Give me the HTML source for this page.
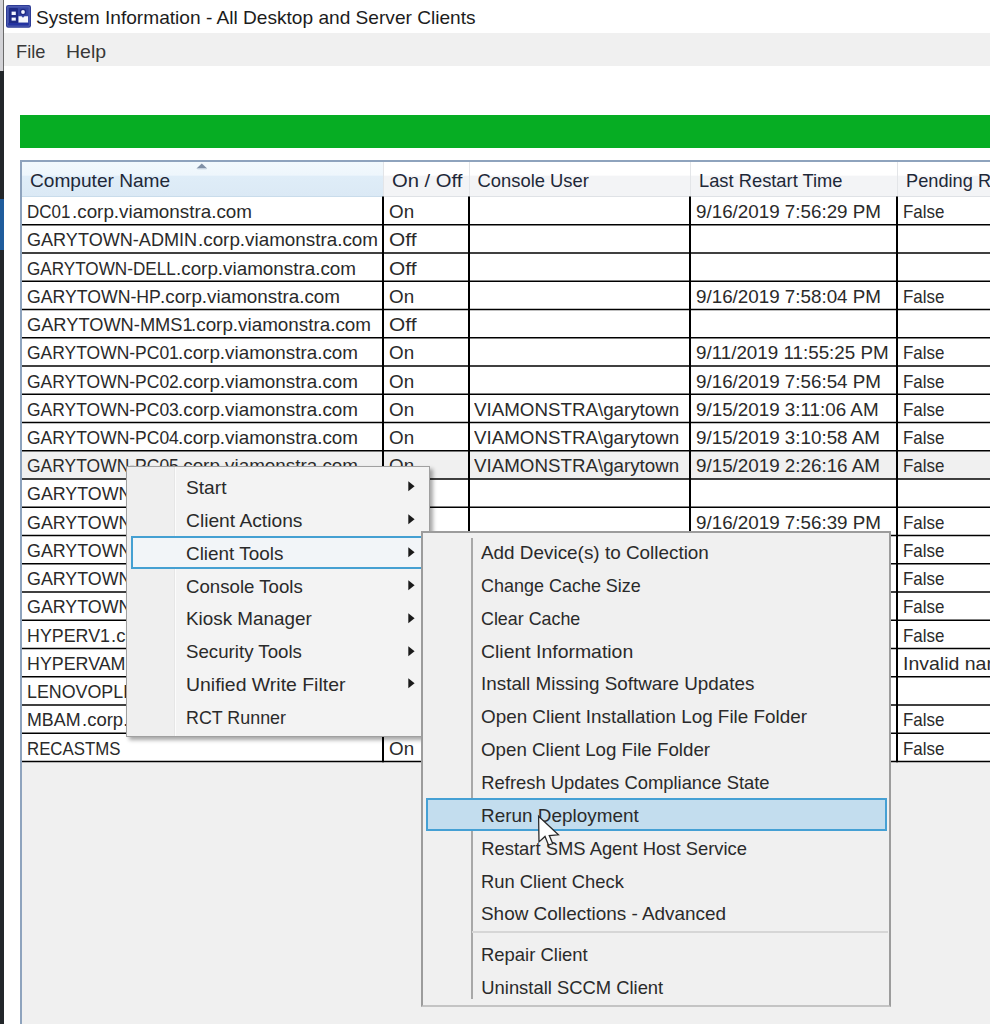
<!DOCTYPE html>
<html><head><meta charset="utf-8">
<style>
html,body{margin:0;padding:0;}
body{width:990px;height:1024px;position:relative;overflow:hidden;background:#fff;font-family:"Liberation Sans",sans-serif;color:#000;}
div{position:absolute;box-sizing:border-box;}
.t{white-space:nowrap;transform-origin:0 0;}
.strip{left:0;top:0;width:4px;height:1024px;background:#22262a;}
.menubar{left:4px;top:33px;width:986px;height:33px;background:#f0f0f0;}
.green{left:20px;top:115px;width:970px;height:33px;background:#06ad23;}
.tbl{left:20px;top:160px;width:970px;height:864px;background:#f0f0f0;border-left:2px solid #8ea3bd;border-top:2px solid #8ea3bd;}
.hdr{left:22px;top:162px;width:968px;height:34.5px;background:linear-gradient(#fff 0px,#fff 13px,#f3f4f6 14.5px,#f3f4f6 100%);border-bottom:1px solid #dfe2e6;}
.hsort{left:22px;top:162px;width:361px;height:34.5px;background:linear-gradient(#f2f9fd 0px,#eef6fc 13px,#dfedf8 14.5px,#dbe9f5 100%);border-bottom:1px solid #c9dceb;}
.hsep{top:162px;width:1px;height:34px;background:#e3e5e8;}
.row{left:22px;width:968px;}
.m1{left:126px;top:466px;width:304px;height:271px;background:linear-gradient(90deg,#efefef 49px,#f3f3f3 49px);border:1px solid #a0a0a0;box-shadow:3px 3px 4px rgba(0,0,0,0.35);}
.gut1{left:174px;top:467px;width:2px;height:269px;background:linear-gradient(90deg,#e6e6e6 50%,#fcfcfc 50%);}
.hi1{left:131px;top:536px;width:292px;height:33px;border:2px solid #45a0d2;background:#f2f5f8;}
.m2{left:421px;top:531px;width:470px;height:476px;background:#f0f0f0;border:2px solid #9c9c9c;border-bottom-color:#c4c4c4;}
.gut2{left:471px;top:538px;width:1.6px;height:461px;background:#a8a8a8;}
.sep2{left:472px;top:931px;width:416px;height:1.6px;background:#d6d6d6;}
.hi2{left:426px;top:797.5px;width:461px;height:33px;border:2px solid #45a0d4;background:#c3ddee;}
</style></head><body>
<div class="strip"></div>
<div style="left:0;top:0;width:3px;height:71px;background:#d2d2d6"></div><div style="left:3px;top:0;width:1px;height:71px;background:#6a6a6a"></div>
<div style="left:0;top:199px;width:3.5px;height:51px;background:#1f5c9c"></div>
<svg style="position:absolute;left:0;top:0" width="40" height="32" viewBox="0 0 40 32">
<rect x="6" y="5" width="25" height="22.8" rx="2.2" fill="#2d3b96"/>
<rect x="7.3" y="6.3" width="22.4" height="20.2" rx="1" fill="#5866b8"/>
<rect x="8.3" y="7.3" width="20.4" height="18.2" fill="#3646a4"/>
<rect x="9" y="8" width="9" height="16" rx="1" fill="#1f2b85"/>
<rect x="11.6" y="11.6" width="4.2" height="3.4" fill="#f4f7ff"/>
<rect x="11.6" y="17.6" width="4.2" height="3" fill="#f4f7ff"/>
<circle cx="23" cy="12" r="3.2" fill="#1f2b85"/>
<circle cx="23" cy="12" r="1.9" fill="#f4f7ff"/>
<path d="M18.5,16.2 L21.5,16.2 L23,17.8 L24.5,16.2 L28,16.2 L28,22.4 L18.5,22.4 Z" fill="#f6f8fc"/>
<rect x="8.3" y="23" width="20.4" height="2.5" fill="#2433a0"/>
</svg>
<div class="t" style="left:35.50px;top:9.02px;font-size:18.4px;line-height:18.4px;color:#1c1c1c;transform:scaleX(1.0388);">System Information - All Desktop and Server Clients</div>
<div class="menubar"></div>
<div class="t" style="left:15.50px;top:42.62px;font-size:18.4px;line-height:18.4px;color:#383838;transform:scaleX(0.9918);">File</div><div class="t" style="left:65.60px;top:42.62px;font-size:18.4px;line-height:18.4px;color:#383838;transform:scaleX(1.0595);">Help</div>
<div class="green"></div>
<div class="tbl"></div>
<div class="hdr"></div>
<div class="hsort"></div>
<svg style="position:absolute;left:196px;top:162.5px" width="12" height="7"><polygon points="0.5,5.5 5.8,0.6 11.2,5.5" fill="#7f90a6"/><line x1="1.5" y1="6" x2="10.5" y2="6" stroke="#d0dde8" stroke-width="1"/></svg>
<div class="hsep" style="left:383px"></div>
<div class="hsep" style="left:469px"></div>
<div class="hsep" style="left:690px"></div>
<div class="hsep" style="left:897px"></div>
<div class="t" style="left:29.70px;top:171.82px;font-size:18.4px;line-height:18.4px;color:#1e2838;transform:scaleX(1.0387);">Computer Name</div>
<div class="t" style="left:392.20px;top:171.82px;font-size:18.4px;line-height:18.4px;color:#1e2838;transform:scaleX(1.0994);">On / Off</div>
<div class="t" style="left:477.50px;top:171.82px;font-size:18.4px;line-height:18.4px;color:#1e2838;">Console User</div>
<div class="t" style="left:699.10px;top:171.82px;font-size:18.4px;line-height:18.4px;color:#1e2838;transform:scaleX(0.9960);">Last Restart Time</div>
<div class="t" style="left:905.50px;top:171.82px;font-size:18.4px;line-height:18.4px;color:#1e2838;transform:scaleX(0.9900);">Pending Reboot</div>
<div class="row" style="top:196.55px;height:564.94px;background:#fff"></div>
<div class="row" style="top:451.47px;height:27.55px;background:#f0f0f0"></div>
<div class="t" style="left:27.00px;top:203.02px;font-size:18.4px;line-height:18.4px;color:#2a2a2a;transform:scaleX(0.9224);">DC01</div>
<div class="t" style="left:71.80px;top:203.02px;font-size:18.4px;line-height:18.4px;color:#2a2a2a;transform:scaleX(1.0240);">.corp.viamonstra.com</div>
<div class="t" style="left:389.10px;top:203.02px;font-size:18.4px;line-height:18.4px;color:#2a2a2a;transform:scaleX(1.0226);">On</div>
<div class="t" style="left:695.80px;top:203.02px;font-size:18.4px;line-height:18.4px;color:#2a2a2a;transform:scaleX(1.0222);">9/16/2019 7:56:29 PM</div>
<div class="t" style="left:902.80px;top:203.02px;font-size:18.4px;line-height:18.4px;color:#2a2a2a;transform:scaleX(0.9202);">False</div>
<div class="t" style="left:27.00px;top:231.27px;font-size:18.4px;line-height:18.4px;color:#2a2a2a;transform:scaleX(0.9832);">GARYTOWN-ADMIN</div>
<div class="t" style="left:197.60px;top:231.27px;font-size:18.4px;line-height:18.4px;color:#2a2a2a;transform:scaleX(1.0240);">.corp.viamonstra.com</div>
<div class="t" style="left:389.40px;top:231.27px;font-size:18.4px;line-height:18.4px;color:#2a2a2a;transform:scaleX(1.1340);">Off</div>
<div class="t" style="left:27.00px;top:259.52px;font-size:18.4px;line-height:18.4px;color:#2a2a2a;transform:scaleX(0.9309);">GARYTOWN-DELL</div>
<div class="t" style="left:176.20px;top:259.52px;font-size:18.4px;line-height:18.4px;color:#2a2a2a;transform:scaleX(1.0240);">.corp.viamonstra.com</div>
<div class="t" style="left:389.40px;top:259.52px;font-size:18.4px;line-height:18.4px;color:#2a2a2a;transform:scaleX(1.1340);">Off</div>
<div class="t" style="left:27.00px;top:287.77px;font-size:18.4px;line-height:18.4px;color:#2a2a2a;transform:scaleX(0.9607);">GARYTOWN-HP</div>
<div class="t" style="left:160.40px;top:287.77px;font-size:18.4px;line-height:18.4px;color:#2a2a2a;transform:scaleX(1.0240);">.corp.viamonstra.com</div>
<div class="t" style="left:389.10px;top:287.77px;font-size:18.4px;line-height:18.4px;color:#2a2a2a;transform:scaleX(1.0226);">On</div>
<div class="t" style="left:695.80px;top:287.77px;font-size:18.4px;line-height:18.4px;color:#2a2a2a;transform:scaleX(1.0222);">9/16/2019 7:58:04 PM</div>
<div class="t" style="left:902.80px;top:287.77px;font-size:18.4px;line-height:18.4px;color:#2a2a2a;transform:scaleX(0.9202);">False</div>
<div class="t" style="left:27.00px;top:316.01px;font-size:18.4px;line-height:18.4px;color:#2a2a2a;transform:scaleX(0.9923);">GARYTOWN-MMS1</div>
<div class="t" style="left:190.50px;top:316.01px;font-size:18.4px;line-height:18.4px;color:#2a2a2a;transform:scaleX(1.0240);">.corp.viamonstra.com</div>
<div class="t" style="left:389.40px;top:316.01px;font-size:18.4px;line-height:18.4px;color:#2a2a2a;transform:scaleX(1.1340);">Off</div>
<div class="t" style="left:27.00px;top:344.26px;font-size:18.4px;line-height:18.4px;color:#2a2a2a;transform:scaleX(0.9503);">GARYTOWN-PC01</div>
<div class="t" style="left:178.40px;top:344.26px;font-size:18.4px;line-height:18.4px;color:#2a2a2a;transform:scaleX(1.0240);">.corp.viamonstra.com</div>
<div class="t" style="left:389.10px;top:344.26px;font-size:18.4px;line-height:18.4px;color:#2a2a2a;transform:scaleX(1.0226);">On</div>
<div class="t" style="left:695.80px;top:344.26px;font-size:18.4px;line-height:18.4px;color:#2a2a2a;transform:scaleX(1.0222);">9/11/2019 11:55:25 PM</div>
<div class="t" style="left:902.80px;top:344.26px;font-size:18.4px;line-height:18.4px;color:#2a2a2a;transform:scaleX(0.9202);">False</div>
<div class="t" style="left:27.00px;top:372.51px;font-size:18.4px;line-height:18.4px;color:#2a2a2a;transform:scaleX(0.9503);">GARYTOWN-PC02</div>
<div class="t" style="left:178.40px;top:372.51px;font-size:18.4px;line-height:18.4px;color:#2a2a2a;transform:scaleX(1.0240);">.corp.viamonstra.com</div>
<div class="t" style="left:389.10px;top:372.51px;font-size:18.4px;line-height:18.4px;color:#2a2a2a;transform:scaleX(1.0226);">On</div>
<div class="t" style="left:695.80px;top:372.51px;font-size:18.4px;line-height:18.4px;color:#2a2a2a;transform:scaleX(1.0222);">9/16/2019 7:56:54 PM</div>
<div class="t" style="left:902.80px;top:372.51px;font-size:18.4px;line-height:18.4px;color:#2a2a2a;transform:scaleX(0.9202);">False</div>
<div class="t" style="left:27.00px;top:400.75px;font-size:18.4px;line-height:18.4px;color:#2a2a2a;transform:scaleX(0.9503);">GARYTOWN-PC03</div>
<div class="t" style="left:178.40px;top:400.75px;font-size:18.4px;line-height:18.4px;color:#2a2a2a;transform:scaleX(1.0240);">.corp.viamonstra.com</div>
<div class="t" style="left:389.10px;top:400.75px;font-size:18.4px;line-height:18.4px;color:#2a2a2a;transform:scaleX(1.0226);">On</div>
<div class="t" style="left:473.60px;top:400.75px;font-size:18.4px;line-height:18.4px;color:#2a2a2a;transform:scaleX(1.0192);">VIAMONSTRA\garytown</div>
<div class="t" style="left:695.80px;top:400.75px;font-size:18.4px;line-height:18.4px;color:#2a2a2a;transform:scaleX(1.0222);">9/15/2019 3:11:06 AM</div>
<div class="t" style="left:902.80px;top:400.75px;font-size:18.4px;line-height:18.4px;color:#2a2a2a;transform:scaleX(0.9202);">False</div>
<div class="t" style="left:27.00px;top:429.00px;font-size:18.4px;line-height:18.4px;color:#2a2a2a;transform:scaleX(0.9503);">GARYTOWN-PC04</div>
<div class="t" style="left:178.40px;top:429.00px;font-size:18.4px;line-height:18.4px;color:#2a2a2a;transform:scaleX(1.0240);">.corp.viamonstra.com</div>
<div class="t" style="left:389.10px;top:429.00px;font-size:18.4px;line-height:18.4px;color:#2a2a2a;transform:scaleX(1.0226);">On</div>
<div class="t" style="left:473.60px;top:429.00px;font-size:18.4px;line-height:18.4px;color:#2a2a2a;transform:scaleX(1.0192);">VIAMONSTRA\garytown</div>
<div class="t" style="left:695.80px;top:429.00px;font-size:18.4px;line-height:18.4px;color:#2a2a2a;transform:scaleX(1.0222);">9/15/2019 3:10:58 AM</div>
<div class="t" style="left:902.80px;top:429.00px;font-size:18.4px;line-height:18.4px;color:#2a2a2a;transform:scaleX(0.9202);">False</div>
<div class="t" style="left:27.00px;top:457.25px;font-size:18.4px;line-height:18.4px;color:#2a2a2a;transform:scaleX(0.9503);">GARYTOWN-PC05</div>
<div class="t" style="left:178.40px;top:457.25px;font-size:18.4px;line-height:18.4px;color:#2a2a2a;transform:scaleX(1.0240);">.corp.viamonstra.com</div>
<div class="t" style="left:389.10px;top:457.25px;font-size:18.4px;line-height:18.4px;color:#2a2a2a;transform:scaleX(1.0226);">On</div>
<div class="t" style="left:473.60px;top:457.25px;font-size:18.4px;line-height:18.4px;color:#2a2a2a;transform:scaleX(1.0192);">VIAMONSTRA\garytown</div>
<div class="t" style="left:695.80px;top:457.25px;font-size:18.4px;line-height:18.4px;color:#2a2a2a;transform:scaleX(1.0222);">9/15/2019 2:26:16 AM</div>
<div class="t" style="left:902.80px;top:457.25px;font-size:18.4px;line-height:18.4px;color:#2a2a2a;transform:scaleX(0.9202);">False</div>
<div class="t" style="left:27.00px;top:485.49px;font-size:18.4px;line-height:18.4px;color:#2a2a2a;transform:scaleX(0.9700);">GARYTOWN-PC06</div>
<div class="t" style="left:183.05px;top:485.49px;font-size:18.4px;line-height:18.4px;color:#2a2a2a;transform:scaleX(1.0060);">.corp.viamonstra.com</div>
<div class="t" style="left:389.40px;top:485.49px;font-size:18.4px;line-height:18.4px;color:#2a2a2a;transform:scaleX(1.1340);">Off</div>
<div class="t" style="left:27.00px;top:513.74px;font-size:18.4px;line-height:18.4px;color:#2a2a2a;transform:scaleX(0.9700);">GARYTOWN-PC07</div>
<div class="t" style="left:183.05px;top:513.74px;font-size:18.4px;line-height:18.4px;color:#2a2a2a;transform:scaleX(1.0060);">.corp.viamonstra.com</div>
<div class="t" style="left:389.10px;top:513.74px;font-size:18.4px;line-height:18.4px;color:#2a2a2a;transform:scaleX(1.0226);">On</div>
<div class="t" style="left:695.80px;top:513.74px;font-size:18.4px;line-height:18.4px;color:#2a2a2a;transform:scaleX(1.0222);">9/16/2019 7:56:39 PM</div>
<div class="t" style="left:902.80px;top:513.74px;font-size:18.4px;line-height:18.4px;color:#2a2a2a;transform:scaleX(0.9202);">False</div>
<div class="t" style="left:27.00px;top:541.99px;font-size:18.4px;line-height:18.4px;color:#2a2a2a;transform:scaleX(0.9700);">GARYTOWN-PC08</div>
<div class="t" style="left:183.05px;top:541.99px;font-size:18.4px;line-height:18.4px;color:#2a2a2a;transform:scaleX(1.0060);">.corp.viamonstra.com</div>
<div class="t" style="left:389.10px;top:541.99px;font-size:18.4px;line-height:18.4px;color:#2a2a2a;transform:scaleX(1.0226);">On</div>
<div class="t" style="left:695.80px;top:541.99px;font-size:18.4px;line-height:18.4px;color:#2a2a2a;transform:scaleX(1.0222);">9/16/2019 7:57:12 PM</div>
<div class="t" style="left:902.80px;top:541.99px;font-size:18.4px;line-height:18.4px;color:#2a2a2a;transform:scaleX(0.9202);">False</div>
<div class="t" style="left:27.00px;top:570.24px;font-size:18.4px;line-height:18.4px;color:#2a2a2a;transform:scaleX(0.9700);">GARYTOWN-PC09</div>
<div class="t" style="left:183.05px;top:570.24px;font-size:18.4px;line-height:18.4px;color:#2a2a2a;transform:scaleX(1.0060);">.corp.viamonstra.com</div>
<div class="t" style="left:389.10px;top:570.24px;font-size:18.4px;line-height:18.4px;color:#2a2a2a;transform:scaleX(1.0226);">On</div>
<div class="t" style="left:695.80px;top:570.24px;font-size:18.4px;line-height:18.4px;color:#2a2a2a;transform:scaleX(1.0222);">9/16/2019 7:57:40 PM</div>
<div class="t" style="left:902.80px;top:570.24px;font-size:18.4px;line-height:18.4px;color:#2a2a2a;transform:scaleX(0.9202);">False</div>
<div class="t" style="left:27.00px;top:598.48px;font-size:18.4px;line-height:18.4px;color:#2a2a2a;transform:scaleX(0.9700);">GARYTOWN-PC10</div>
<div class="t" style="left:183.05px;top:598.48px;font-size:18.4px;line-height:18.4px;color:#2a2a2a;transform:scaleX(1.0060);">.corp.viamonstra.com</div>
<div class="t" style="left:389.10px;top:598.48px;font-size:18.4px;line-height:18.4px;color:#2a2a2a;transform:scaleX(1.0226);">On</div>
<div class="t" style="left:695.80px;top:598.48px;font-size:18.4px;line-height:18.4px;color:#2a2a2a;transform:scaleX(1.0222);">9/16/2019 7:58:21 PM</div>
<div class="t" style="left:902.80px;top:598.48px;font-size:18.4px;line-height:18.4px;color:#2a2a2a;transform:scaleX(0.9202);">False</div>
<div class="t" style="left:27.00px;top:626.73px;font-size:18.4px;line-height:18.4px;color:#2a2a2a;transform:scaleX(0.9700);">HYPERV1</div>
<div class="t" style="left:110.99px;top:626.73px;font-size:18.4px;line-height:18.4px;color:#2a2a2a;transform:scaleX(1.0060);">.corp.viamonstra.com</div>
<div class="t" style="left:389.10px;top:626.73px;font-size:18.4px;line-height:18.4px;color:#2a2a2a;transform:scaleX(1.0226);">On</div>
<div class="t" style="left:695.80px;top:626.73px;font-size:18.4px;line-height:18.4px;color:#2a2a2a;transform:scaleX(1.0222);">9/16/2019 7:50:02 PM</div>
<div class="t" style="left:902.80px;top:626.73px;font-size:18.4px;line-height:18.4px;color:#2a2a2a;transform:scaleX(0.9202);">False</div>
<div class="t" style="left:27.00px;top:654.98px;font-size:18.4px;line-height:18.4px;color:#2a2a2a;transform:scaleX(0.9700);">HYPERVAMI</div>
<div class="t" style="left:131.48px;top:654.98px;font-size:18.4px;line-height:18.4px;color:#2a2a2a;transform:scaleX(1.0060);">.corp.viamonstra.com</div>
<div class="t" style="left:389.10px;top:654.98px;font-size:18.4px;line-height:18.4px;color:#2a2a2a;transform:scaleX(1.0226);">On</div>
<div class="t" style="left:902.80px;top:654.98px;font-size:18.4px;line-height:18.4px;color:#2a2a2a;transform:scaleX(1.0600);">Invalid name</div>
<div class="t" style="left:27.00px;top:683.22px;font-size:18.4px;line-height:18.4px;color:#2a2a2a;transform:scaleX(0.9700);">LENOVOPLEX</div>
<div class="t" style="left:148.03px;top:683.22px;font-size:18.4px;line-height:18.4px;color:#2a2a2a;transform:scaleX(1.0060);">.corp.viamonstra.com</div>
<div class="t" style="left:389.40px;top:683.22px;font-size:18.4px;line-height:18.4px;color:#2a2a2a;transform:scaleX(1.1340);">Off</div>
<div class="t" style="left:27.00px;top:711.47px;font-size:18.4px;line-height:18.4px;color:#2a2a2a;transform:scaleX(0.9700);">MBAM</div>
<div class="t" style="left:81.54px;top:711.47px;font-size:18.4px;line-height:18.4px;color:#2a2a2a;transform:scaleX(1.0060);">.corp.viamonstra.com</div>
<div class="t" style="left:389.10px;top:711.47px;font-size:18.4px;line-height:18.4px;color:#2a2a2a;transform:scaleX(1.0226);">On</div>
<div class="t" style="left:695.80px;top:711.47px;font-size:18.4px;line-height:18.4px;color:#2a2a2a;transform:scaleX(1.0222);">9/16/2019 7:56:10 PM</div>
<div class="t" style="left:902.80px;top:711.47px;font-size:18.4px;line-height:18.4px;color:#2a2a2a;transform:scaleX(0.9202);">False</div>
<div class="t" style="left:27.00px;top:739.72px;font-size:18.4px;line-height:18.4px;color:#2a2a2a;transform:scaleX(0.9136);">RECASTMS</div>
<div class="t" style="left:389.10px;top:739.72px;font-size:18.4px;line-height:18.4px;color:#2a2a2a;transform:scaleX(1.0226);">On</div>
<div class="t" style="left:695.80px;top:739.72px;font-size:18.4px;line-height:18.4px;color:#2a2a2a;transform:scaleX(1.0222);">9/16/2019 7:55:48 PM</div>
<div class="t" style="left:902.80px;top:739.72px;font-size:18.4px;line-height:18.4px;color:#2a2a2a;transform:scaleX(0.9202);">False</div>
<svg style="position:absolute;left:0;top:0" width="990" height="1024"><line x1="22" y1="224.80" x2="990" y2="224.80" stroke="#000" stroke-width="1.4"/><line x1="22" y1="253.05" x2="990" y2="253.05" stroke="#000" stroke-width="1.4"/><line x1="22" y1="281.29" x2="990" y2="281.29" stroke="#000" stroke-width="1.4"/><line x1="22" y1="309.54" x2="990" y2="309.54" stroke="#000" stroke-width="1.4"/><line x1="22" y1="337.79" x2="990" y2="337.79" stroke="#000" stroke-width="1.4"/><line x1="22" y1="366.04" x2="990" y2="366.04" stroke="#000" stroke-width="1.4"/><line x1="22" y1="394.28" x2="990" y2="394.28" stroke="#000" stroke-width="1.4"/><line x1="22" y1="422.53" x2="990" y2="422.53" stroke="#000" stroke-width="1.4"/><line x1="22" y1="450.78" x2="990" y2="450.78" stroke="#000" stroke-width="1.4"/><line x1="22" y1="479.02" x2="990" y2="479.02" stroke="#000" stroke-width="1.4"/><line x1="22" y1="507.27" x2="990" y2="507.27" stroke="#000" stroke-width="1.4"/><line x1="22" y1="535.52" x2="990" y2="535.52" stroke="#000" stroke-width="1.4"/><line x1="22" y1="563.76" x2="990" y2="563.76" stroke="#000" stroke-width="1.4"/><line x1="22" y1="592.01" x2="990" y2="592.01" stroke="#000" stroke-width="1.4"/><line x1="22" y1="620.26" x2="990" y2="620.26" stroke="#000" stroke-width="1.4"/><line x1="22" y1="648.50" x2="990" y2="648.50" stroke="#000" stroke-width="1.4"/><line x1="22" y1="676.75" x2="990" y2="676.75" stroke="#000" stroke-width="1.4"/><line x1="22" y1="705.00" x2="990" y2="705.00" stroke="#000" stroke-width="1.4"/><line x1="22" y1="733.25" x2="990" y2="733.25" stroke="#000" stroke-width="1.4"/><line x1="22" y1="761.49" x2="990" y2="761.49" stroke="#000" stroke-width="1.4"/><line x1="383" y1="196.55" x2="383" y2="762.19" stroke="#000" stroke-width="2"/><line x1="469" y1="196.55" x2="469" y2="762.19" stroke="#000" stroke-width="2"/><line x1="690" y1="196.55" x2="690" y2="762.19" stroke="#000" stroke-width="2"/><line x1="897" y1="196.55" x2="897" y2="762.19" stroke="#000" stroke-width="2"/></svg>
<div class="m1"></div>
<div class="gut1"></div>
<div class="hi1"></div>
<div class="t" style="left:186.40px;top:479.02px;font-size:18.4px;line-height:18.4px;color:#2a2a2a;transform:scaleX(1.0422);">Start</div>
<svg style="position:absolute;left:407.8px;top:481.30px" width="8" height="11"><polygon points="0.3,0.2 6.6,5.2 0.3,10.2" fill="#1a1a1a"/></svg>
<div class="t" style="left:186.40px;top:511.88px;font-size:18.4px;line-height:18.4px;color:#2a2a2a;transform:scaleX(1.0450);">Client Actions</div>
<svg style="position:absolute;left:407.8px;top:514.16px" width="8" height="11"><polygon points="0.3,0.2 6.6,5.2 0.3,10.2" fill="#1a1a1a"/></svg>
<div class="t" style="left:186.40px;top:544.74px;font-size:18.4px;line-height:18.4px;color:#2a2a2a;transform:scaleX(1.0277);">Client Tools</div>
<svg style="position:absolute;left:407.8px;top:547.02px" width="8" height="11"><polygon points="0.3,0.2 6.6,5.2 0.3,10.2" fill="#1a1a1a"/></svg>
<div class="t" style="left:186.40px;top:577.60px;font-size:18.4px;line-height:18.4px;color:#2a2a2a;transform:scaleX(1.0135);">Console Tools</div>
<svg style="position:absolute;left:407.8px;top:579.88px" width="8" height="11"><polygon points="0.3,0.2 6.6,5.2 0.3,10.2" fill="#1a1a1a"/></svg>
<div class="t" style="left:186.40px;top:610.46px;font-size:18.4px;line-height:18.4px;color:#2a2a2a;transform:scaleX(1.0258);">Kiosk Manager</div>
<svg style="position:absolute;left:407.8px;top:612.74px" width="8" height="11"><polygon points="0.3,0.2 6.6,5.2 0.3,10.2" fill="#1a1a1a"/></svg>
<div class="t" style="left:186.40px;top:643.32px;font-size:18.4px;line-height:18.4px;color:#2a2a2a;transform:scaleX(1.0157);">Security Tools</div>
<svg style="position:absolute;left:407.8px;top:645.60px" width="8" height="11"><polygon points="0.3,0.2 6.6,5.2 0.3,10.2" fill="#1a1a1a"/></svg>
<div class="t" style="left:186.40px;top:676.18px;font-size:18.4px;line-height:18.4px;color:#2a2a2a;transform:scaleX(1.0564);">Unified Write Filter</div>
<svg style="position:absolute;left:407.8px;top:678.46px" width="8" height="11"><polygon points="0.3,0.2 6.6,5.2 0.3,10.2" fill="#1a1a1a"/></svg>
<div class="t" style="left:186.40px;top:709.04px;font-size:18.4px;line-height:18.4px;color:#2a2a2a;transform:scaleX(0.9714);">RCT Runner</div>
<div class="m2"></div>
<div class="gut2"></div>
<div class="sep2"></div>
<div class="hi2"></div>
<div class="t" style="left:481.30px;top:544.02px;font-size:18.4px;line-height:18.4px;color:#2a2a2a;transform:scaleX(1.0274);">Add Device(s) to Collection</div>
<div class="t" style="left:481.30px;top:576.88px;font-size:18.4px;line-height:18.4px;color:#2a2a2a;transform:scaleX(0.9770);">Change Cache Size</div>
<div class="t" style="left:481.30px;top:609.74px;font-size:18.4px;line-height:18.4px;color:#2a2a2a;transform:scaleX(0.9710);">Clear Cache</div>
<div class="t" style="left:481.30px;top:642.60px;font-size:18.4px;line-height:18.4px;color:#2a2a2a;transform:scaleX(1.0562);">Client Information</div>
<div class="t" style="left:481.30px;top:675.46px;font-size:18.4px;line-height:18.4px;color:#2a2a2a;transform:scaleX(1.0251);">Install Missing Software Updates</div>
<div class="t" style="left:481.30px;top:708.32px;font-size:18.4px;line-height:18.4px;color:#2a2a2a;transform:scaleX(1.0252);">Open Client Installation Log File Folder</div>
<div class="t" style="left:481.30px;top:741.18px;font-size:18.4px;line-height:18.4px;color:#2a2a2a;transform:scaleX(1.0186);">Open Client Log File Folder</div>
<div class="t" style="left:481.30px;top:774.04px;font-size:18.4px;line-height:18.4px;color:#2a2a2a;">Refresh Updates Compliance State</div>
<div class="t" style="left:481.30px;top:806.90px;font-size:18.4px;line-height:18.4px;color:#2a2a2a;transform:scaleX(1.0287);">Rerun Deployment</div>
<div class="t" style="left:481.30px;top:839.76px;font-size:18.4px;line-height:18.4px;color:#2a2a2a;">Restart SMS Agent Host Service</div>
<div class="t" style="left:481.30px;top:872.62px;font-size:18.4px;line-height:18.4px;color:#2a2a2a;transform:scaleX(0.9979);">Run Client Check</div>
<div class="t" style="left:481.30px;top:905.48px;font-size:18.4px;line-height:18.4px;color:#2a2a2a;transform:scaleX(1.0289);">Show Collections - Advanced</div>
<div class="t" style="left:481.30px;top:945.72px;font-size:18.4px;line-height:18.4px;color:#2a2a2a;transform:scaleX(1.0033);">Repair Client</div>
<div class="t" style="left:481.30px;top:978.58px;font-size:18.4px;line-height:18.4px;color:#2a2a2a;">Uninstall SCCM Client</div>
<svg style="position:absolute;left:530px;top:808px" width="36" height="44" viewBox="0 0 36 44">
<path d="M8.6,8.2 L9.0,33.9 L15.0,28.4 L18.5,37.0 L22.8,35.7 L19.3,27.5 L28.4,26.8 Z" fill="#fff" stroke="#2a2a2a" stroke-width="1.3" stroke-linejoin="miter"/>
</svg>
</body></html>
